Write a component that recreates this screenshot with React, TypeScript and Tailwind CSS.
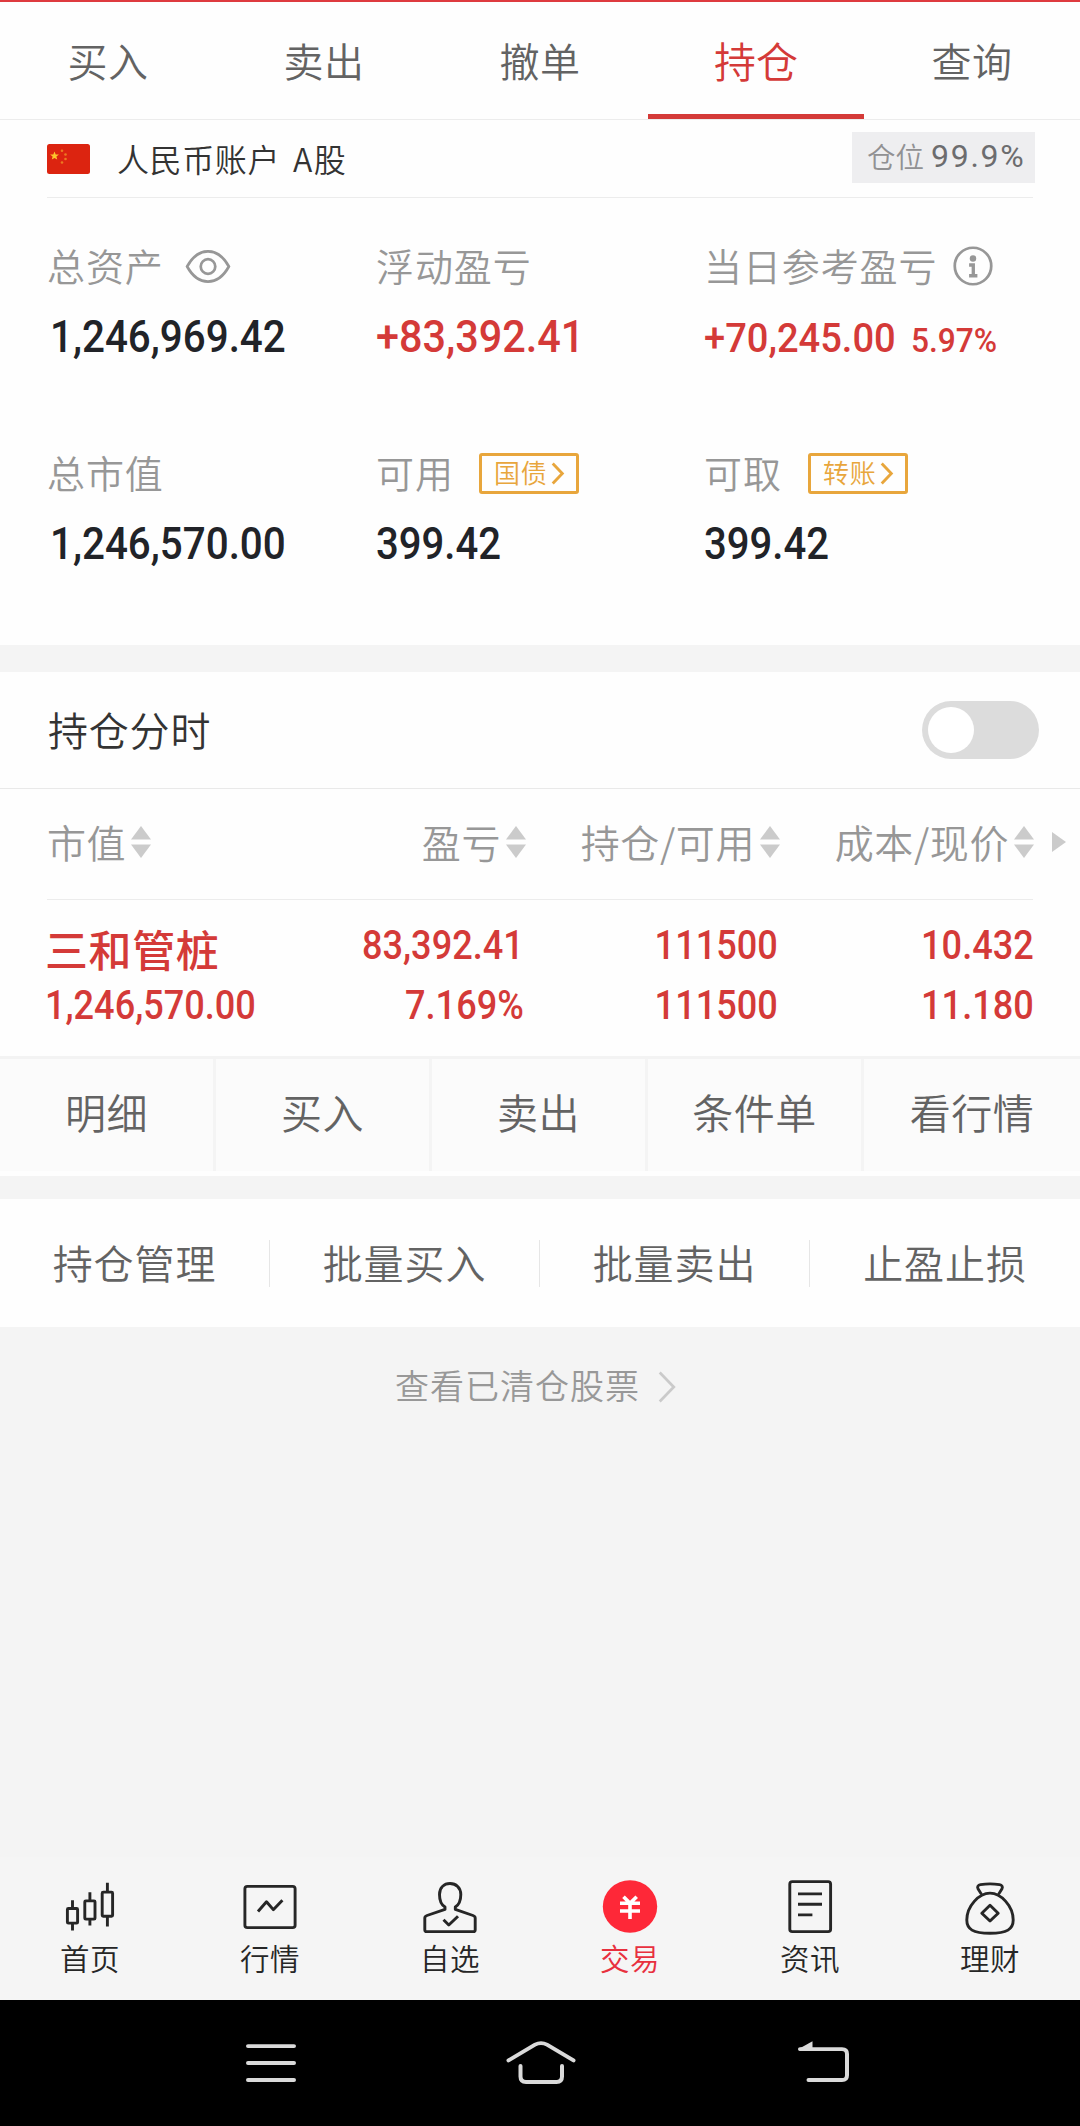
import type { ReactNode } from "react";
import clsx from "clsx";

const tabs = ["买入", "卖出", "撤单", "持仓", "查询"];
const actions = ["明细", "买入", "卖出", "条件单", "看行情"];
const tools = ["持仓管理", "批量买入", "批量卖出", "止盈止损"];

function Num({ children, className }: { children: ReactNode; className?: string }) {
  return (
    <span className={clsx("block whitespace-nowrap font-['Roboto',sans-serif] leading-[50px] font-medium", className)}>
      {children}
    </span>
  );
}

function Amount({ children, className }: { children: ReactNode; className?: string }) {
  return (
    <Num className={clsx("mt-[26px] origin-left text-[44.5px]", className ?? "scale-x-[0.9] text-[#212328]")}>{children}</Num>
  );
}

function Cell({ top, bottom, className }: { top: string; bottom: string; className: string }) {
  return (
    <div className={clsx("text-right", className)}>
      <Num className="origin-right scale-x-[0.885]">{top}</Num>
      <Num className="mt-[10px] origin-right scale-x-[0.885]">{bottom}</Num>
    </div>
  );
}

function Label({ children }: { children: ReactNode }) {
  return <span className="-mt-[2px] text-[38px] leading-[40px] tracking-[0.9px] text-[#979797]">{children}</span>;
}

function Tag({ children }: { children: ReactNode }) {
  return (
    <span className="flex h-[41px] w-[100px] items-center justify-center gap-[3px] rounded-[3px] border-[3px] border-[#e8a63c] pl-px text-[#e8a63c]">
      <span className="-mt-[3px] text-[26px] leading-[30px] tracking-[0.8px]">{children}</span>
      <svg className="h-[23px] w-[14px]" viewBox="0 0 14 24" fill="none" stroke="currentColor" strokeWidth="3">
        <path d="M1.5 1.5 11.5 12 1.5 22.5" />
      </svg>
    </span>
  );
}

function Sort() {
  return (
    <svg className="h-[32px] w-[20px] shrink-0" viewBox="0 0 20 32" fill="#cbcbcb">
      <path d="M10 0 20 13.5H0Z" />
      <path d="M0 18.5H20L10 32Z" />
    </svg>
  );
}

function Head({ children, className }: { children: ReactNode; className?: string }) {
  return (
    <div className={clsx("flex items-center gap-[5px]", className)}>
      <span className="-mt-[3px] text-[39px] leading-[44px] tracking-[0.6px] whitespace-nowrap text-[#979797]">{children}</span>
      <Sort />
    </div>
  );
}

function Flag() {
  return (
    <svg className="h-[30px] w-[43px]" viewBox="0 0 43 30">
      <rect width="43" height="30" rx="2.5" fill="#dc2410" />
      <path d="m7.5 7.5 1.200 2.900 3.200.2-2.500 2 .8 3-2.700-1.600-2.700 1.600.8-3-2.500-2 3.200-.2Z" fill="#fdc52b" />
      <g fill="#ec7a20">
        <circle cx="15" cy="6.800" r="1.300" />
        <circle cx="18.500" cy="10.500" r="1.300" />
        <circle cx="18.500" cy="15" r="1.300" />
        <circle cx="15" cy="18.500" r="1.300" />
      </g>
    </svg>
  );
}

const navItems: { label: string; active?: boolean; icon: ReactNode }[] = [
  {
    label: "首页",
    icon: (
      <g>
        <rect x="7.4" y="32.6" width="10.2" height="15.2" rx="1" />
        <path d="M12.5 24v8.6M12.5 48v7.3" />
        <rect x="24.8" y="24.7" width="10.2" height="18.9" rx="1" />
        <path d="M29.9 15.7v9M29.9 43.6v6.7" />
        <rect x="42.2" y="15.7" width="10.4" height="24.9" rx="1" />
        <path d="M47.4 6v9.7M47.4 40.6v10.6" />
      </g>
    ),
  },
  {
    label: "行情",
    icon: (
      <g>
        <rect x="4.9" y="9.6" width="50.2" height="42.7" rx="2.5" />
        <path d="M18 35.7 26.5 25.6 33.3 33.8 42.4 24" />
      </g>
    ),
  },
  {
    label: "自选",
    icon: (
      <g>
        <path d="M25 33.5v-2.500C21 28.500 19.500 24.500 19.500 18 19.500 11 24 6.700 30 6.700S40.800 11 40.800 18c0 6.500-1.700 10.500-5.500 13v2.500L53 39.800c1.400.5 2.200 1.200 2.200 2.700V54.500c0 1.400-.6 2-2 2H6.800c-1.400 0-2-.6-2-2V42.500c0-1.500.8-2.200 2.200-2.700Z" />
        <path d="M23.5 44.3 28.8 49.6 38 40.5" />
      </g>
    ),
  },
  {
    label: "交易",
    active: true,
    icon: (
      <g>
        <circle cx="30" cy="30.5" r="27.2" fill="#fe2838" stroke="none" />
        <path stroke="#fff" strokeWidth="3.6" d="M23.5 20.5 30 27.2 36.7 20.5M20 27.2H40M20 35.2H40M30 27V43.5" />
      </g>
    ),
  },
  {
    label: "资讯",
    icon: (
      <g>
        <rect x="9.8" y="4.8" width="40.8" height="51.7" rx="2.5" />
        <path d="M18 17.5H42M18 28.2H42M18 39.2H32.4" />
      </g>
    ),
  },
  {
    label: "理财",
    icon: (
      <g>
        <path d="M30 16.7C41 16.7 53.2 30 53.2 44.5 53.2 54 47 58.2 30 58.2S6.8 54 6.8 44.5C6.8 30 19 16.7 30 16.7Z" />
        <path d="M21.5 18 18 12.2C17 10 18 8.4 20.5 8 26 7 34 7 39.5 8c2.500.4 3.500 2 2.500 4.200L38.5 18" />
        <path d="M30 29.3 38.2 37.4 30 45.5 21.8 37.4Z" />
      </g>
    ),
  },
];

export default function App() {
  return (
    <div className="flex h-[2126px] w-[1080px] flex-col overflow-hidden bg-[#f4f4f4] font-['Noto_Sans_CJK_SC',sans-serif] font-[350] text-[#333]">
      <nav className="flex h-[120px] shrink-0 border-t-2 border-b border-t-[#de3a3f] border-b-[#ececec] bg-[#fefefe]">
        {tabs.map((t) => (
          <button
            key={t}
            className={clsx(
              "flex w-[216px] justify-center border-b-[5px] pt-[30px] leading-[56px]",
              t === "持仓" ? "border-[#d43a38] text-[42px] text-[#d43a38]" : "border-transparent text-[40px] tracking-[0.5px] text-[#636363]",
            )}
          >
            {t}
          </button>
        ))}
      </nav>

      <section className="h-[525px] shrink-0 bg-[#fefefe] px-[47px]">
        <div className="flex h-[78px] items-center border-b border-[#ececec]">
          <Flag />
          <span className="-mt-[2px] ml-[27px] flex gap-[13px] text-[32px] leading-[36px] tracking-[0.6px]">
            <span>人民币账户</span>
            <span className="tracking-[1.5px]">A股</span>
          </span>
          <span className="-mt-[2px] -mr-[2px] ml-auto flex h-[51px] w-[183px] items-center gap-[7px] bg-[#eeeef0] pl-[15px] text-[#919193]">
            <span className="-mt-[4px] text-[28.5px] leading-[32px]">仓位</span>
            <span className="-mt-[3px] font-['Roboto',sans-serif] text-[32px] leading-[36px] font-normal tracking-[1.7px] text-[#6c6c6e]">
              99.9%
            </span>
          </span>
        </div>

        <div className="grid grid-cols-[329px_328px_1fr] pt-[48px]">
          <div className="h-[207px]">
            <div className="flex h-[40px] items-center gap-[21px]">
              <Label>总资产</Label>
              <svg className="h-[33px] w-[46px]" viewBox="0 0 46 34" fill="none" stroke="#979797" strokeWidth="2.8">
                <path d="M1.5 17C7 7 14.5 1.5 23 1.5S39 7 44.5 17C39 27 31.5 32.5 23 32.5S7 27 1.5 17Z" />
                <circle cx="23" cy="17" r="7.5" />
              </svg>
            </div>
            <Amount className="ml-[3px] scale-x-[0.907] text-[#212328]">1,246,969.42</Amount>
          </div>
          <div>
            <div className="flex h-[40px] items-center">
              <Label>浮动盈亏</Label>
            </div>
            <Amount className="scale-x-[0.93] text-[#d43a38]">+83,392.41</Amount>
          </div>
          <div>
            <div className="flex h-[40px] items-center gap-[16px]">
              <Label>当日参考盈亏</Label>
              <svg className="h-[40px] w-[40px]" viewBox="0 0 41 41" fill="none" stroke="#979797" strokeWidth="2.8">
                <circle cx="20.5" cy="20.5" r="18.7" />
                <circle cx="20.5" cy="12.8" r="3.300" fill="#979797" stroke="none" />
                <path strokeWidth="3.4" d="M16.5 19.5H20.8V30.500M16.5 30.500H25" />
              </svg>
            </div>
            <div className="mt-[27px] flex items-baseline text-[#d43a38]">
              <Num className="w-[207px] origin-left scale-x-[0.94] text-[40.5px]">+70,245.00</Num>
              <Num className="origin-left scale-x-[0.96] text-[33px]">5.97%</Num>
            </div>
          </div>

          <div>
            <div className="flex h-[40px] items-center">
              <Label>总市值</Label>
            </div>
            <Amount className="ml-[3px] scale-x-[0.907] text-[#212328]">1,246,570.00</Amount>
          </div>
          <div>
            <div className="flex h-[40px] items-center gap-[25px]">
              <Label>可用</Label>
              <Tag>国债</Tag>
            </div>
            <Amount>399.42</Amount>
          </div>
          <div>
            <div className="flex h-[40px] items-center gap-[26px]">
              <Label>可取</Label>
              <Tag>转账</Tag>
            </div>
            <Amount>399.42</Amount>
          </div>
        </div>
      </section>

      <section className="mt-[27px] h-[504px] shrink-0 bg-[#fefefe]">
        <div className="flex h-[117px] items-center justify-between border-b border-[#e9e9e9] pr-[41px] pl-[48px]">
          <span className="-mt-[2px] text-[40px] leading-[44px] tracking-[0.8px]">持仓分时</span>
          <span className="flex h-[58px] w-[117px] items-center rounded-full bg-[#dcdcdc] pl-[6px]">
            <span className="size-[46px] rounded-full bg-white" />
          </span>
        </div>

        <div className="flex h-[110px] items-center pb-[4px]">
          <Head className="ml-[47px] w-[239px]">市值</Head>
          <Head className="w-[240px] justify-end">盈亏</Head>
          <Head className="w-[254px] justify-end">持仓/可用</Head>
          <Head className="w-[254px] justify-end">成本/现价</Head>
          <svg className="-mt-[1px] ml-[18px] h-[20px] w-[14px]" viewBox="0 0 14 20" fill="#cbcbcb">
            <path d="M0 0 14 10 0 20Z" />
          </svg>
        </div>
        <div className="mx-[47px] h-px bg-[#ececec]" />

        <div className="flex h-[156px] pt-[20px] pr-[46px] pl-[45px] text-[40.8px] text-[#d43a38]">
          <div className="w-[241px]">
            <div className="h-[56px] text-[43px] leading-[56px] font-medium tracking-[0.6px]">三和管桩</div>
            <Num className="mt-[4px] origin-left scale-x-[0.885]">1,246,570.00</Num>
          </div>
          <Cell className="w-[238px]" top="83,392.41" bottom="7.169%" />
          <Cell className="w-[254px]" top="111500" bottom="111500" />
          <Cell className="w-[257px]" top="10.432" bottom="11.180" />
        </div>

        <div className="flex h-[115px] border-t-[3px] border-[#f3f3f3] bg-[#fbfbfb]">
          {actions.map((a) => (
            <button
              key={a}
              className="flex w-[216px] justify-center border-r-[3px] border-[#f4f4f4] pt-[24px] text-[41px] leading-[56px] tracking-[0.5px] text-[#636363] last:border-r-0"
            >
              {a}
            </button>
          ))}
        </div>
      </section>

      <section className="mt-[23px] grid h-[128px] shrink-0 grid-cols-4 items-center bg-[#fefefe]">
        {tools.map((t) => (
          <button
            key={t}
            className="h-[47px] border-r border-[#e6e6e6] pb-[3px] text-[40px] leading-[44px] tracking-[0.9px] text-[#636363] last:border-r-0"
          >
            {t}
          </button>
        ))}
      </section>

      <button className="mt-[38px] ml-[395px] flex h-[44px] items-center gap-[18px] text-[#989898]">
        <span className="-mt-[4px] text-[34px] leading-[40px] tracking-[1px]">查看已清仓股票</span>
        <svg className="h-[32px] w-[18px]" viewBox="0 0 18 33" fill="none" stroke="#cacaca" strokeWidth="2.8">
          <path d="M1.5 1.5 16 16.500 1.5 31.500" />
        </svg>
      </button>

      <nav className="mt-auto flex h-[143px] shrink-0 bg-[#f5f5f5] pt-[20px]">
        {navItems.map((n) => (
          <button key={n.label} className={clsx("flex w-[180px] flex-col items-center", n.active ? "text-[#e8303e]" : "text-[#262626]")}>
            <svg
              className="h-[58px] w-[60px]"
              viewBox="0 0 60 60"
              preserveAspectRatio="none"
              fill="none"
              stroke="#262626"
              strokeWidth="2.9"
              strokeLinejoin="round"
            >
              {n.icon}
            </svg>
            <span className="mt-[2px] text-[29.5px] leading-[40px] tracking-[0.5px]">{n.label}</span>
          </button>
        ))}
      </nav>

      <footer className="flex h-[126px] shrink-0 bg-black pt-[34px] pl-[231px]">
        <svg
          className="h-[58px] w-[80px]"
          viewBox="0 0 80 60"
          preserveAspectRatio="none"
          stroke="#dadada"
          strokeWidth="4"
          strokeLinecap="round"
        >
          <path d="M17 12.5H63M17 30H63M17 47.6H63" />
        </svg>
        <svg
          className="ml-[190px] h-[58px] w-[80px]"
          viewBox="0 0 80 60"
          preserveAspectRatio="none"
          fill="none"
          stroke="#dadada"
          strokeWidth="4"
          strokeLinecap="round"
        >
          <path d="M7.5 27.3 34 11Q40 7.800 46 11L72.5 27.3" />
          <path d="M19.5 33V44Q19.5 49.6 25 49.6H55.5Q61 49.6 61 44V33" />
        </svg>
        <svg
          className="ml-[201px] h-[58px] w-[80px]"
          viewBox="0 0 80 60"
          preserveAspectRatio="none"
          fill="none"
          stroke="#dadada"
          strokeWidth="4"
          strokeLinecap="round"
        >
          <path d="M18 15.6H60Q65 15.6 65 20.6V42.6Q65 47.6 60 47.6H26.500" />
          <path d="M16.5 15.6 30.500 7.500V17H17Z" fill="#dadada" stroke="none" />
        </svg>
      </footer>
    </div>
  );
}
